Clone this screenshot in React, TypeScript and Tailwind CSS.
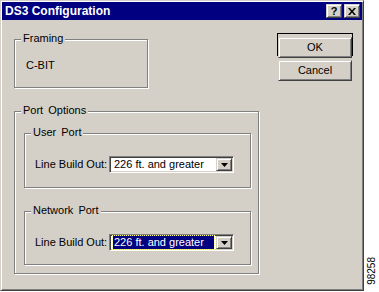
import { ReactNode } from "react";

const raised =
  "border border-t-[#d4d0c8] border-l-[#d4d0c8] border-r-[#404040] border-b-[#404040] shadow-[inset_1px_1px_0_#fff,inset_-1px_-1px_0_#808080]";

function GroupBox({ label, className, children }: { label: string; className: string; children?: ReactNode }) {
  return (
    <div
      className={`relative border border-[#808080] shadow-[1px_1px_0_#fff,inset_1px_1px_0_#fff] ${className}`}
    >
      <span className="absolute -top-[8px] left-[6px] bg-[#d4d0c8] px-[2px] text-[11px] leading-[13px] [word-spacing:2px]">
        {label}
      </span>
      {children}
    </div>
  );
}

function DropArrow() {
  return (
    <div className={`w-[16px] h-full flex items-center justify-center bg-[#d4d0c8] ${raised}`}>
      <svg width="7" height="4" viewBox="0 0 7 4">
        <path d="M0 0h7L3.5 4z" fill="#000" />
      </svg>
    </div>
  );
}

function LineBuildOut({ focused }: { focused?: boolean }) {
  return (
    <div className="flex items-center pl-[10px] pt-[22px]">
      <span className="text-[11px] leading-[13px] w-[74px]">Line Build Out:</span>
      <div className="w-[125px] h-[17px] flex bg-white border border-t-[#808080] border-l-[#808080] border-r-white border-b-white shadow-[inset_1px_1px_0_#404040,inset_-1px_-1px_0_#d4d0c8] p-[1px]">
        <div className="flex-1 flex items-center pl-[2px] pr-[2px]">
          {focused ? (
            <div className="w-full h-[13px] bg-[#000080] text-white outline-1 outline-dotted outline-[#ffff80] text-[11px] leading-[13px] pl-[1px]">
              226 ft. and greater
            </div>
          ) : (
            <span className="text-[11px] leading-[13px] pl-[1px]">226 ft. and greater</span>
          )}
        </div>
        <DropArrow />
      </div>
    </div>
  );
}

export default function App() {
  return (
    <div className="flex w-[379px] h-[292px] bg-white font-['Liberation_Sans',Arial,sans-serif] text-black">
      <div className="w-[364px] h-[291px] flex flex-col bg-[#d4d0c8] border border-t-[#d4d0c8] border-l-[#d4d0c8] border-r-[#404040] border-b-[#404040] shadow-[inset_1px_1px_0_#fff,inset_-1px_-1px_0_#808080] p-[1px]">
        <div className="h-[18px] bg-[#000080] flex items-center justify-between pl-[3px] pr-[2px]">
          <span className="text-white font-bold text-[12px] leading-[14px]">DS3 Configuration</span>
          <div className="flex gap-[2px]">
            <div className={`w-[16px] h-[14px] bg-[#d4d0c8] flex items-center justify-center text-[11px] font-bold leading-none ${raised}`}>
              ?
            </div>
            <div className={`w-[16px] h-[14px] bg-[#d4d0c8] flex items-center justify-center ${raised}`}>
              <svg width="8" height="7" viewBox="0 0 8 7">
                <path d="M0 0h2l2 2.5L6 0h2L5 3.5 8 7H6L4 4.5 2 7H0l3-3.5z" fill="#000" />
              </svg>
            </div>
          </div>
        </div>

        <div className="flex flex-1 pl-[12px]">
          <div className="w-[245px] flex flex-col">
            <GroupBox label="Framing" className="w-[134px] h-[49px] mt-[19px]">
              <div className="pt-[19px] pl-[11px] text-[11px] leading-[13px]">C-BIT</div>
            </GroupBox>

            <GroupBox label="Port Options" className="w-[245px] h-[163px] mt-[23px] pt-[21px] pl-[9px]">
              <GroupBox label="User Port" className="w-[227px] h-[55px]">
                <LineBuildOut />
              </GroupBox>
              <GroupBox label="Network Port" className="w-[227px] h-[54px] mt-[23px]">
                <LineBuildOut focused />
              </GroupBox>
            </GroupBox>
          </div>

          <div className="ml-[18px] mt-[13px] flex flex-col items-start">
            <div className="w-[76px] h-[23px] border border-black">
              <button className={`w-full h-full bg-[#d4d0c8] text-[11px] leading-[13px] ${raised}`}>OK</button>
            </div>
            <button className={`mt-[4px] ml-[1px] w-[74px] h-[21px] bg-[#d4d0c8] text-[11px] leading-[13px] ${raised}`}>
              Cancel
            </button>
          </div>
        </div>
      </div>

      <div className="flex-1 flex items-end justify-center pb-[7px]">
        <span className="[writing-mode:vertical-rl] rotate-180 text-[10px] leading-[11px]">98258</span>
      </div>
    </div>
  );
}
